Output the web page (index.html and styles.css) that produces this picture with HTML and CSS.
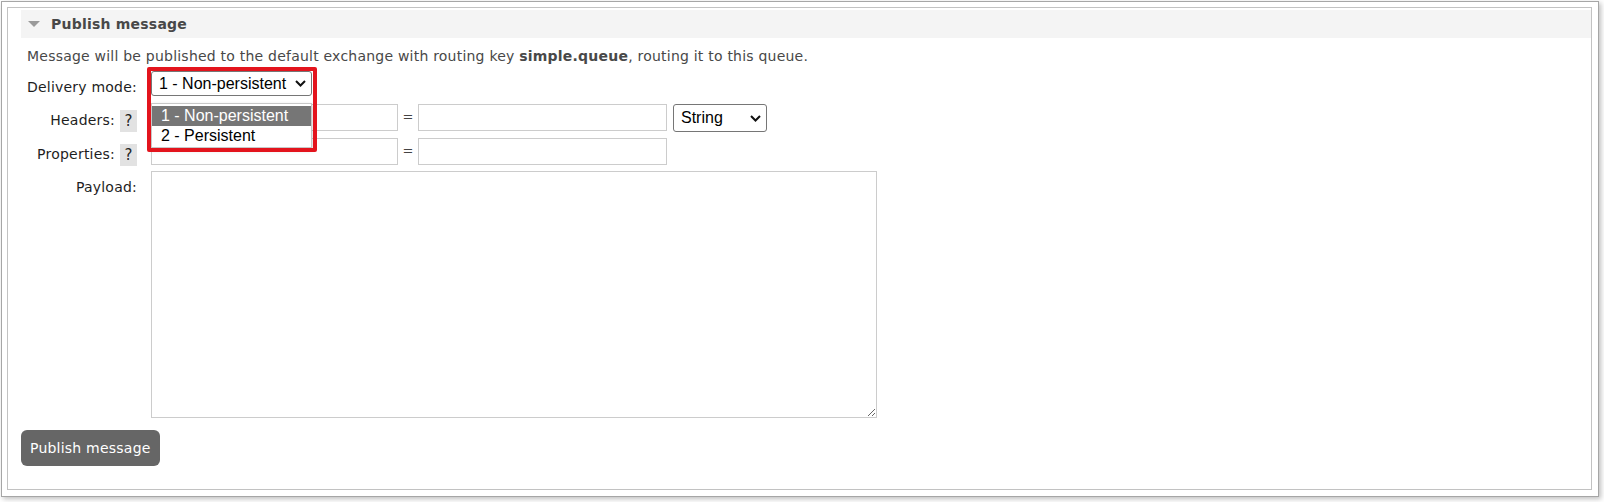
FILE: index.html
```html
<!DOCTYPE html>
<html lang="en">
<head>
    <meta charset="UTF-8">
    <title>Publish message</title>
    <link rel="stylesheet" href="styles.css">
</head>
<body>
    <div class="frame">
        <div class="panel">
            <h2 class="section-head"><span class="arrow"></span>Publish message</h2>
            <div class="section-body">
                <p class="note">Message will be published to the default exchange with routing key <b>simple.queue</b>, routing it to this queue.</p>

                <div class="form-row row-mode">
                    <div class="label">Delivery mode:</div>
                    <div class="field field-mode">
                        <div class="select select-mode">
                            <span>1 - Non-persistent</span>
                            <svg class="chev" width="11" height="7" viewBox="0 0 11 7"><path d="M1 1 L5.5 5.5 L10 1" fill="none" stroke="#111" stroke-width="2"/></svg>
                        </div>
                        <!-- open option list -->
                        <ul class="dropdown">
                            <li class="picked">1 - Non-persistent</li>
                            <li>2 - Persistent</li>
                        </ul>
                        <!-- red annotation frame -->
                        <div class="callout"></div>
                    </div>
                </div>

                <div class="form-row row-headers">
                    <div class="label">Headers:<span class="help">?</span></div>
                    <div class="field">
                        <input class="text key" type="text">
                        <span class="eq">=</span>
                        <input class="text val" type="text">
                        <div class="select select-type">
                            <span>String</span>
                            <svg class="chev" width="11" height="7" viewBox="0 0 11 7"><path d="M1 1 L5.5 5.5 L10 1" fill="none" stroke="#111" stroke-width="2"/></svg>
                        </div>
                    </div>
                </div>

                <div class="form-row row-props">
                    <div class="label">Properties:<span class="help">?</span></div>
                    <div class="field">
                        <input class="text key" type="text">
                        <span class="eq">=</span>
                        <input class="text val" type="text">
                    </div>
                </div>

                <div class="form-row row-payload">
                    <div class="label">Payload:</div>
                    <div class="field">
                        <textarea class="payload"></textarea>
                    </div>
                </div>

                <button class="btn">Publish message</button>
            </div>
        </div>
    </div>
</body>
</html>
```

FILE: styles.css
```css
* { box-sizing: border-box; }
html, body { margin: 0; }
body { width: 1604px; height: 502px; overflow: hidden; background: #fff; font-family: "DejaVu Sans", Verdana, sans-serif; font-size: 14px; letter-spacing: 0.22px; color: #1e1e1e; }

/* outer window + panel */
.frame { margin: 1px 0 0 1px; width: 1598px; height: 496px; border: 1px solid #a6a6a6; padding: 5px 6px 6px 5px; box-shadow: 2px 2px 5px rgba(0, 0, 0, 0.25); }
.panel { height: 100%; border: 1px solid #c2c2c2; }

.section-head { margin: 2px 0 0 13px; height: 28px; padding-left: 7px; display: flex; align-items: center; background: #f4f4f4; font-size: 14px; font-weight: bold; color: #484848; }
.arrow { width: 0; height: 0; border-left: 6px solid transparent; border-right: 6px solid transparent; border-top: 6px solid #9a9a9a; margin-right: 11px; }

.section-body { padding-left: 13px; }
.note { margin: 9px 0 0 6px; line-height: 18px; color: #484848; }

/* form rows */
.form-row { display: flex; align-items: flex-start; margin-left: 4px; }
.label { flex: none; width: 112px; padding-top: 8px; line-height: 16px; text-align: right; white-space: nowrap; color: #1e1e1e; }
.field { margin-left: 14px; display: flex; align-items: flex-start; }
.row-mode { margin-top: 6px; }
.row-headers { margin-top: 8px; }
.row-props { margin-top: 6px; }
.row-payload { margin-top: 6px; }

.help { display: inline-block; width: 17px; height: 22px; line-height: 22px; margin: -3px 0 -3px 5px; vertical-align: middle; background: #e2e2e2; text-align: center; letter-spacing: 0; font-size: 15px; color: #222; }

.text { height: 27px; margin: 0; padding: 2px 4px; border: 1px solid #ccc; background: #fff; font: inherit; outline: none; }
.key { width: 247px; }
.val { width: 249px; }
.eq { width: 20px; line-height: 26px; text-align: center; color: #444; font-size: 13px; letter-spacing: 0; }

/* select look-alikes */
.select { display: flex; align-items: center; justify-content: space-between; padding: 0 5px 0 7px; border: 1px solid #767676; border-radius: 3px; background: #fff; font-family: "Liberation Sans", Arial, sans-serif; font-size: 16px; letter-spacing: 0; color: #000; }
.select-mode { width: 161px; height: 25px; }
.select-type { width: 94px; height: 28px; margin-left: 6px; }
.chev { flex: none; }

.field-mode { position: relative; }
.dropdown { position: absolute; left: 0; top: 32px; z-index: 2; width: 161px; margin: 0; padding: 2px 0 1px; list-style: none; background: #fff; border: 1px solid #c8c8c8; box-shadow: 0 2px 4px rgba(0, 0, 0, 0.25); font-family: "Liberation Sans", Arial, sans-serif; font-size: 16px; letter-spacing: 0; color: #000; }
.dropdown li { height: 20px; line-height: 20px; padding-left: 9px; }
.dropdown li.picked { background: #767676; color: #fff; }

.callout { position: absolute; left: -4px; top: -4px; z-index: 3; width: 170px; height: 85px; border: 4px solid #e3141d; border-radius: 2px; pointer-events: none; }

.payload { display: block; width: 726px; height: 247px; margin: 0; border: 1px solid #ccc; background: #fff; resize: both; outline: none; font: inherit; }

.btn { margin-top: 12px; height: 36px; padding: 0 9px; border: none; border-radius: 6px; background: #666; color: #fff; font-family: "DejaVu Sans", Verdana, sans-serif; font-size: 14px; letter-spacing: 0.22px; cursor: pointer; }
.btn:hover { background: #555; }
```
